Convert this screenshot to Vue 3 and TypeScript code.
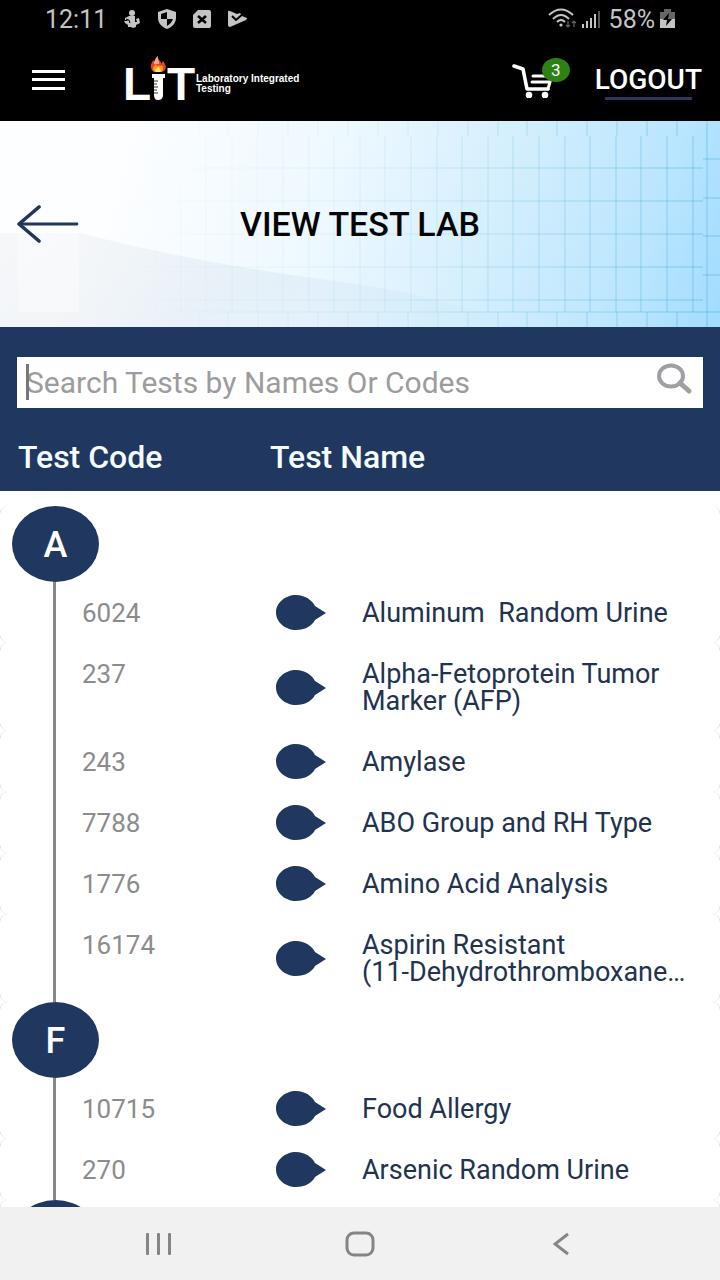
<script setup lang="ts">
import { ref } from 'vue'

interface Test {
  code: string
  name: string
}

interface Group {
  letter: string
  tests: Test[]
}

const query = ref('')
const cartCount = ref(3)

const groups: Group[] = [
  {
    letter: 'A',
    tests: [
      { code: '6024', name: 'Aluminum  Random Urine' },
      { code: '237', name: 'Alpha-Fetoprotein Tumor Marker (AFP)' },
      { code: '243', name: 'Amylase' },
      { code: '7788', name: 'ABO Group and RH Type' },
      { code: '1776', name: 'Amino Acid Analysis' },
      { code: '16174', name: 'Aspirin Resistant\n(11-Dehydrothromboxane…' },
    ],
  },
  {
    letter: 'F',
    tests: [
      { code: '10715', name: 'Food Allergy' },
      { code: '270', name: 'Arsenic Random Urine' },
    ],
  },
  { letter: '', tests: [] },
]

const series = (start: number, step: number, count: number): number[] =>
  Array.from({ length: count }, (_, i) => Math.round(start + i * step))

const gridColumns = series(155, 25.6, 22)
const gridRows = series(47, 33, 5)
const edgeColumns = series(49, 29.9, 22)
const sideRows = series(38, 38.6, 4)
</script>

<template>
  <div class="page">
    <header class="top">
      <div class="status">
        <div class="status-side">
          <span>12:11</span>
          <svg class="s-icon" width="18" height="20" viewBox="0 0 18 20" fill="#c4c4c4">
            <circle cx="9" cy="4" r="3" />
            <path d="M6 7 H12 L12 13 L14 13 L13 10 L16 9 L17 14 L13 16 L13 18 L10 19 L8 18 H5 V16 L2 14 L1 12 H5 L4 11 L2 11 V9 Z" />
            <path d="M3 10 L6 11 L7 14" fill="none" stroke="#000" stroke-width="1" />
          </svg>
          <svg class="s-icon" width="20" height="20" viewBox="0 0 20 20">
            <path d="M10 0 L19 3 V9 C19 14 15 18 10 20 C5 18 1 14 1 9 V3 Z" fill="#c4c4c4" />
            <path d="M10 3 V10 H4 V5 Z M10 10 H16 C15 13 13 15 10 17 Z" fill="#000" />
          </svg>
          <svg class="s-icon" width="18" height="20" viewBox="0 0 18 20">
            <path d="M5 1 H16 Q18 1 18 3 V17 Q18 19 16 19 H2 Q0 19 0 17 V6 Z" fill="#c4c4c4" />
            <path d="M5 7 L13 14 M13 7 L5 14" stroke="#000" stroke-width="2.6" />
          </svg>
          <svg class="s-icon" width="20" height="20" viewBox="0 0 20 20">
            <path d="M1 3 Q1 1 3 2 L10 5 L13 4 L15 7 L20 9 Q20 10 19 11 L3 18 Q1 18 1 16 Z" fill="#c4c4c4" />
            <path d="M5 7 L9 11 L17 4" fill="none" stroke="#000" stroke-width="2" />
          </svg>
        </div>
        <div class="status-side status-right">
          <svg width="29" height="22" viewBox="0 0 29 22" fill="none" stroke="#c4c4c4" stroke-width="2">
            <path d="M1 7 Q13 -4 25 7" />
            <path d="M5 11 Q13 3 21 11" />
            <path d="M9 14 Q13 10 17 14" />
            <circle cx="13" cy="17" r="1.6" fill="#c4c4c4" stroke="none" />
            <path d="M20 13 V19 M18 17 L20 19 L22 17 M26 19 V13 M24 15 L26 13 L28 15" stroke="#666" stroke-width="1.2" />
          </svg>
          <svg width="18" height="18" viewBox="0 0 18 18" fill="#c4c4c4">
            <rect x="0" y="14" width="2" height="4" />
            <rect x="4" y="11" width="2" height="7" />
            <rect x="8" y="8" width="2" height="10" />
            <rect x="12" y="4" width="2" height="14" />
            <rect x="16" y="1" width="2" height="17" fill="#555" />
          </svg>
          <span class="percent">58%</span>
          <svg width="15" height="20" viewBox="0 0 15 20">
            <path d="M4 0 H11 V3 H15 V10 H0 V3 H4 Z" fill="#666" />
            <path d="M0 10 H15 V19 H0 Z" fill="#c4c4c4" />
            <path d="M9 4 L3 11 H7 L6 17 L12 10 H8 Z" fill="#000" />
          </svg>
        </div>
      </div>

      <div class="bar">
        <button class="menu" type="button" aria-label="Menu">
          <svg width="33" height="20" viewBox="0 0 33 20" fill="#fff">
            <rect width="33" height="3" />
            <rect y="8" width="33" height="3" />
            <rect y="17" width="33" height="3" />
          </svg>
        </button>
        <a class="logo" href="#">
          <svg width="75" height="60" viewBox="-5 -6 75 60">
            <text class="logo-letter" x="-3" y="44">L</text>
            <text class="logo-letter" x="41" y="44">T</text>
            <path d="M26 18 H39 V22 H37 V39 Q37 44 32 44 Q28 44 28 39 V22 H26 Z" fill="#fff" />
            <path d="M28 25 H32 M28 28 H31 M28 31 H32 M28 34 H31 M28 37 H32" stroke="#333" stroke-width="1" />
            <path d="M28 16 C22 11 26 7 27 4 L29 6 C29 3 30 1 32 0 C31 4 36 5 35 8 L37 5 C41 10 41 14 36 16 Z" fill="#e2412a" />
            <path d="M28 8 C28 4 30 2 32 0 C31 4 34 5 33 8 Z" fill="#f3a49a" />
            <path d="M29 16 C25 13 28 10 30 8 C31 10 32 11 33 9 C34 11 35 10 36 9 C38 13 37 15 35 16 Z" fill="#ff9d1e" />
            <path d="M30 16 C28 14 31 12 32 11 C34 13 36 14 34 16 Z" fill="#ffe65c" />
          </svg>
          <span class="tagline">Laboratory Integrated<br>Testing</span>
        </a>
        <button class="cart" type="button" aria-label="Cart">
          <svg width="44" height="34" viewBox="0 0 44 34" fill="none" stroke="#fff" stroke-linecap="round" stroke-linejoin="round">
            <path d="M2 2 L11 5 L15 25 H36" stroke-width="3.6" />
            <path d="M40 11 L36 25" stroke-width="3" />
            <path d="M21 12 H36 M20 18 H37" stroke-width="3" />
            <circle cx="17" cy="31" r="3.3" fill="#fff" stroke="none" />
            <circle cx="33" cy="31" r="3.3" fill="#fff" stroke="none" />
          </svg>
          <span class="badge">{{ cartCount }}</span>
        </button>
        <button class="logout" type="button">LOGOUT</button>
      </div>
    </header>

    <section class="hero">
      <svg class="hero-art" viewBox="0 0 720 206" preserveAspectRatio="none" aria-hidden="true">
        <defs>
          <linearGradient id="sky" gradientUnits="userSpaceOnUse" x1="120" y1="0" x2="740" y2="170">
            <stop offset="0" stop-color="#fdfeff" />
            <stop offset="0.35" stop-color="#edf8ff" />
            <stop offset="0.62" stop-color="#d2eefd" />
            <stop offset="0.85" stop-color="#b9e5fe" />
            <stop offset="1" stop-color="#9edbfe" />
          </linearGradient>
          <linearGradient id="ink" gradientUnits="userSpaceOnUse" x1="120" y1="0" x2="720" y2="60">
            <stop offset="0" stop-color="#4aa8d0" stop-opacity="0" />
            <stop offset="0.5" stop-color="#4aa8d0" stop-opacity="0.14" />
            <stop offset="1" stop-color="#3aa5d4" stop-opacity="0.45" />
          </linearGradient>
          <linearGradient id="wave" gradientUnits="userSpaceOnUse" x1="0" y1="100" x2="200" y2="420">
            <stop offset="0" stop-color="#8090a0" stop-opacity="0.06" />
            <stop offset="0.5" stop-color="#7090b0" stop-opacity="0.09" />
            <stop offset="1" stop-color="#60a0d0" stop-opacity="0" />
          </linearGradient>
        </defs>
        <rect width="720" height="206" fill="url(#sky)" />
        <path d="M0 112 H80 C150 130 230 146 320 158 C400 168 460 182 520 206 H0 Z" fill="url(#wave)" />
        <rect x="18" y="112" width="61" height="79" fill="#fff" opacity="0.4" />
        <g stroke="url(#ink)" stroke-width="1" fill="none">
          <path v-for="x in gridColumns" :key="'c' + x" :d="`M${x} 15 L${x + 0.01} 191`" />
          <path v-for="y in gridRows" :key="'r' + y" :d="`M120 ${y} L703 ${y + 0.01}`" />
          <path v-for="x in edgeColumns" :key="'e' + x" :d="`M${x} 0 L${x + 0.01} 15 M${x} 191 V206`" />
          <path v-for="y in sideRows" :key="'s' + y" :d="`M703 ${y} L720 ${y + 0.01}`" />
          <path d="M707 0 L707.01 206" />
          <path d="M60 191 L720 191.01" />
        </g>
      </svg>
      <button class="back" type="button" aria-label="Back">
        <svg width="62" height="38" viewBox="0 0 62 38" fill="none" stroke="#20385c" stroke-linecap="round" stroke-linejoin="round">
          <path d="M22 2 L2 19 L22 36" stroke-width="3.6" />
          <path d="M3 19 H60" stroke-width="2.8" />
        </svg>
      </button>
      <h1>VIEW TEST LAB</h1>
    </section>

    <form class="search" @submit.prevent>
      <div class="field">
        <input v-model="query" type="text" aria-label="Search tests" placeholder="Search Tests by Names Or Codes">
        <span class="caret" aria-hidden="true"></span>
        <button class="find" type="submit" aria-label="Search">
          <svg width="36" height="32" viewBox="0 0 36 32" fill="none" stroke="#a0a0a4">
            <ellipse cx="14" cy="13" rx="12" ry="10.5" stroke-width="4" />
            <path d="M23 20 L32 28" stroke-width="5" stroke-linecap="round" />
          </svg>
        </button>
      </div>
    </form>

    <main class="list">
      <table>
        <colgroup>
          <col class="col-code">
          <col class="col-mark">
          <col>
        </colgroup>
        <thead>
          <tr>
            <th class="head-code" scope="col">Test Code</th>
            <th scope="col" colspan="2">Test Name</th>
          </tr>
        </thead>
        <tbody v-for="group in groups" :key="group.letter">
          <tr class="letter-row">
            <th colspan="3" scope="rowgroup"><span class="letter">{{ group.letter }}</span></th>
          </tr>
          <tr v-for="test in group.tests" :key="test.code" class="test-row">
            <td class="code">{{ test.code }}</td>
            <td class="mark">
              <svg width="50" height="35" viewBox="0 0 50 35" fill="#20385f">
                <path d="M20 0 C29 0 36 5 39 11 L50 18 L39 25 C36 31 29 35 20 35 C9 35 0 27 0 17.500 C0 8 9 0 20 0 Z" />
              </svg>
            </td>
            <td class="name">{{ test.name }}</td>
          </tr>
        </tbody>
      </table>
    </main>

    <nav class="nav">
      <button type="button" aria-label="Recent apps">
        <svg width="26" height="24" viewBox="0 0 26 24" fill="#858585">
          <rect x="0" y="1" width="3" height="22" rx="1" />
          <rect x="11" y="1" width="3" height="22" rx="1" />
          <rect x="22" y="1" width="3" height="22" rx="1" />
        </svg>
      </button>
      <button type="button" aria-label="Home">
        <svg width="30" height="26" viewBox="0 0 30 26" fill="none" stroke="#858585" stroke-width="3">
          <rect x="2" y="2" width="26" height="22" rx="7" />
        </svg>
      </button>
      <button type="button" aria-label="Back to previous app">
        <svg width="16" height="24" viewBox="0 0 16 24" fill="none" stroke="#858585" stroke-width="3">
          <path d="M15 2 L2 12 L15 22" />
        </svg>
      </button>
    </nav>
  </div>
</template>

<style>
body {
  margin: 0;
  background: #fff;
}
</style>

<style scoped>
.page {
  display: flex;
  flex-direction: column;
  height: 100vh;
  font-family: Roboto, "Liberation Sans", sans-serif;
  color: #223350;
}

button {
  border: 0;
  padding: 0;
  background: none;
  font: inherit;
  color: inherit;
  cursor: pointer;
}

svg {
  display: block;
}

.top {
  background: #000;
  color: #fff;
}

.status {
  display: flex;
  justify-content: space-between;
  align-items: center;
  height: 38px;
  padding: 0 45px;
  font-size: 25px;
  color: #c4c4c4;
}

.status-side {
  display: flex;
  align-items: center;
}

.s-icon {
  margin-left: 16px;
}

.status-right {
  gap: 5px;
}

.percent {
  margin-left: 4px;
}

.bar {
  display: flex;
  align-items: center;
  height: 83px;
  padding: 0 18px 0 32px;
}

.logo {
  display: flex;
  align-items: center;
  margin-left: 56px;
  margin-right: auto;
  color: #fff;
  text-decoration: none;
}

.logo-letter {
  font: bold 46px "Liberation Sans", sans-serif;
  fill: #fff;
}

.tagline {
  font: bold 10px/10px "Liberation Sans", sans-serif;
  padding-top: 8px;
}

.cart {
  position: relative;
  margin: 3px 39px 0 0;
}

.badge {
  position: absolute;
  top: -6px;
  left: 30px;
  width: 28px;
  height: 24px;
  border-radius: 50%;
  background: #2d8213;
  font-size: 17px;
  line-height: 24px;
  text-align: center;
}

.logout {
  position: relative;
  font-size: 28px;
  line-height: 40px;
  font-weight: 500;
}

.logout::after {
  content: "";
  position: absolute;
  left: 10px;
  right: 10px;
  bottom: 0;
  height: 3px;
  background: #34345c;
}

.hero {
  position: relative;
  display: grid;
  grid-template-columns: 62px 1fr 62px;
  align-items: center;
  height: 206px;
  padding: 0 17px;
}

.hero-art {
  position: absolute;
  inset: 0;
  width: 100%;
  height: 100%;
}

.back,
h1 {
  position: relative;
}

h1 {
  margin: 0;
  font-size: 34px;
  font-weight: 500;
  text-align: center;
  color: #050505;
}

.search {
  padding: 30px 17px 0;
  background: #20385f;
}

.field {
  position: relative;
  display: flex;
  align-items: center;
  height: 51px;
  background: #fff;
}

input {
  flex: 1;
  min-width: 0;
  height: 100%;
  border: 0;
  padding: 0 9px;
  background: none;
  outline: none;
  font: 30px Roboto, sans-serif;
  color: #223350;
}

input::placeholder {
  color: #9c9c9c;
  opacity: 1;
}

.caret {
  position: absolute;
  left: 9px;
  top: 7px;
  width: 3px;
  height: 36px;
  background: #777;
}

.find {
  margin: 0 10px 8px 0;
}

.list {
  flex: 1;
  min-height: 0;
  overflow-y: auto;
  scrollbar-width: none;
}

table {
  width: 100%;
  table-layout: fixed;
  border-collapse: separate;
  border-spacing: 0;
}

.col-code {
  width: 270px;
}

.col-mark {
  width: 92px;
}

thead th {
  padding: 33px 0 18px;
  border-bottom: 15px solid #fff;
  background: #20385f;
  background-clip: padding-box;
  color: #f4fbff;
  font-size: 32px;
  line-height: 32px;
  font-weight: 500;
  text-align: left;
}

thead .head-code {
  padding-left: 18px;
}

tbody {
  background: linear-gradient(90deg, #888, #fff 8px, #fff calc(100% - 8px), #888);
}

.letter-row th {
  padding: 0 0 0 12px;
  border-radius: 8px 8px 0 0;
  background: #fff;
}

.letter {
  display: block;
  width: 87px;
  height: 76px;
  border-radius: 50%;
  background: #20385f;
  color: #fff;
  font-size: 36px;
  line-height: 78px;
  font-weight: 500;
  text-align: center;
}

.test-row td {
  padding: 18px 0 16px;
  background: #fff;
  font-size: 26px;
  line-height: 27px;
  vertical-align: top;
}

.test-row .code {
  padding-left: 82px;
  border-radius: 8px 0 0 8px;
  background: linear-gradient(#888, #888) 53px 0 / 3px 100% no-repeat, #fff;
  color: #8c8c8c;
}

.test-row .mark {
  padding: 0 0 0 6px;
  vertical-align: middle;
}

.test-row .name {
  padding-right: 12px;
  border-radius: 0 8px 8px 0;
  font-size: 27px;
  white-space: pre-wrap;
}

.letter-row + .test-row .code {
  border-top-left-radius: 0;
}

.letter-row + .test-row .name {
  border-top-right-radius: 0;
}

.nav {
  display: flex;
  justify-content: space-around;
  align-items: center;
  height: 73px;
  padding: 0 58px;
  background: #f1f1f1;
}

.nav button {
  display: grid;
  place-items: center;
  width: 60px;
  height: 48px;
}
</style>
